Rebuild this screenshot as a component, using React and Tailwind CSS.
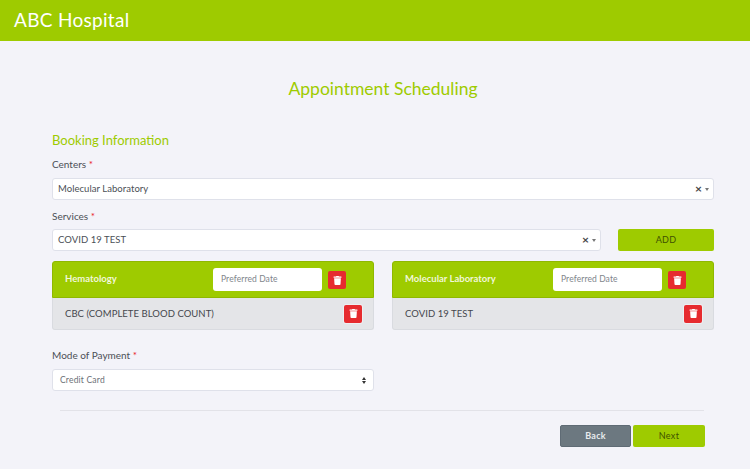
import React from "react";
import { FaTrash } from "react-icons/fa";

function Label({ children, className = "" }) {
  return (
    <div className={`text-[10px] leading-[14px] text-[#4b4f56] ${className}`}>
      {children} <span className="text-[#e8202a]">*</span>
    </div>
  );
}

function ClearSelect({ value, className = "" }) {
  return (
    <div className={`flex h-[22px] items-center justify-between rounded-[3px] border border-[#dfe1ea] bg-white pl-[5px] pr-[4px] ${className}`}>
      <span className="text-[9.5px] tracking-[0.05px] text-[#4b4f56]">{value}</span>
      <span className="flex items-center gap-[3px]">
        <span className="text-[12px] font-bold leading-none text-[#444]">×</span>
        <span className="h-0 w-0 border-x-[2.5px] border-t-[3px] border-x-transparent border-t-[#777]" />
      </span>
    </div>
  );
}

function TrashButton({ className = "" }) {
  return (
    <button type="button" className={`flex h-[18px] w-[18px] items-center justify-center rounded-[2px] bg-[#e62b2f] text-white ${className}`}>
      <FaTrash size={9} />
    </button>
  );
}

function ServiceCard({ title, item }) {
  return (
    <div>
      <div className="flex h-[37px] items-center rounded-t-[3px] border border-[#8fb800] bg-[#9ecb00] pl-[12px] pr-[27px]">
        <span className="flex-1 text-[9.5px] font-bold text-[#f1f7d8]">{title}</span>
        <div className="flex h-[23px] w-[109px] items-center rounded-[3px] bg-white pl-[8px] text-[8.5px] tracking-[0.1px] text-[#80858c]">
          Preferred Date
        </div>
        <TrashButton className="ml-[6px] mt-[1px]" />
      </div>
      <div className="flex h-[32px] items-center justify-between rounded-b-[3px] border-x border-b border-[#d9dbe0] bg-[#e4e5e8] pl-[12px] pr-[11px]">
        <span className="pt-[1px] text-[9.5px] tracking-[0.05px] text-[#44474d]">{item}</span>
        <TrashButton className="ring-1 ring-white/40" />
      </div>
    </div>
  );
}

export default function App() {
  return (
    <div className="h-[469px] overflow-hidden bg-[#f3f3f9] font-['Lato','Noto_Sans',sans-serif]">
      <header className="flex h-[41px] items-center bg-[#9ecb00] pl-[14px]">
        <h1 className="text-[19px] tracking-[0.3px] text-white">ABC Hospital</h1>
      </header>

      <main className="pl-[52px] pr-[36px]">
        <h2 className="mt-[37px] text-center text-[17.5px] leading-[22px] text-[#9ecb00]">
          Appointment Scheduling
        </h2>

        <h3 className="mt-[31px] text-[13px] leading-[18px] text-[#9ecb00]">Booking Information</h3>

        <Label className="mt-[8px]">Centers</Label>
        <ClearSelect value="Molecular Laboratory" className="mt-[7px]" />

        <Label className="mt-[9px]">Services</Label>
        <div className="mt-[6px] flex gap-[17px]">
          <ClearSelect value="COVID 19 TEST" className="flex-1" />
          <button type="button" className="h-[22px] w-[96px] rounded-[2px] bg-[#9ecb00] text-[9px] tracking-[0.3px] text-[#3f5200]">
            ADD
          </button>
        </div>

        <div className="mt-[10px] grid grid-cols-[322px_322px] gap-[18px]">
          <ServiceCard title="Hematology" item="CBC (COMPLETE BLOOD COUNT)" />
          <ServiceCard title="Molecular Laboratory" item="COVID 19 TEST" />
        </div>

        <Label className="mt-[18px]">Mode of Payment</Label>
        <div className="mt-[7px] flex h-[22px] w-[322px] items-center justify-between rounded-[3px] border border-[#dfe1ea] bg-white pl-[7px] pr-[7px]">
          <span className="text-[8.5px] tracking-[0.2px] text-[#6c7077]">Credit Card</span>
          <span className="flex flex-col gap-[1px]">
            <span className="h-0 w-0 border-x-[2.5px] border-b-[3px] border-x-transparent border-b-[#333]" />
            <span className="h-0 w-0 border-x-[2.5px] border-t-[3px] border-x-transparent border-t-[#333]" />
          </span>
        </div>

        <div className="ml-[8px] mr-[10px] mt-[19px] border-t border-[#e2e2e8]" />

        <div className="mr-[9px] mt-[14px] flex justify-end gap-[2px]">
          <button type="button" className="h-[22px] w-[71px] rounded-[2px] border border-[#5f6b75] bg-[#6c7880] text-[9px] font-bold tracking-[0.2px] text-[#e8ebee]">
            Back
          </button>
          <button type="button" className="h-[22px] w-[72px] rounded-[2px] bg-[#9ecb00] text-[9px] tracking-[0.3px] text-[#3f5200]">
            Next
          </button>
        </div>
      </main>
    </div>
  );
}
